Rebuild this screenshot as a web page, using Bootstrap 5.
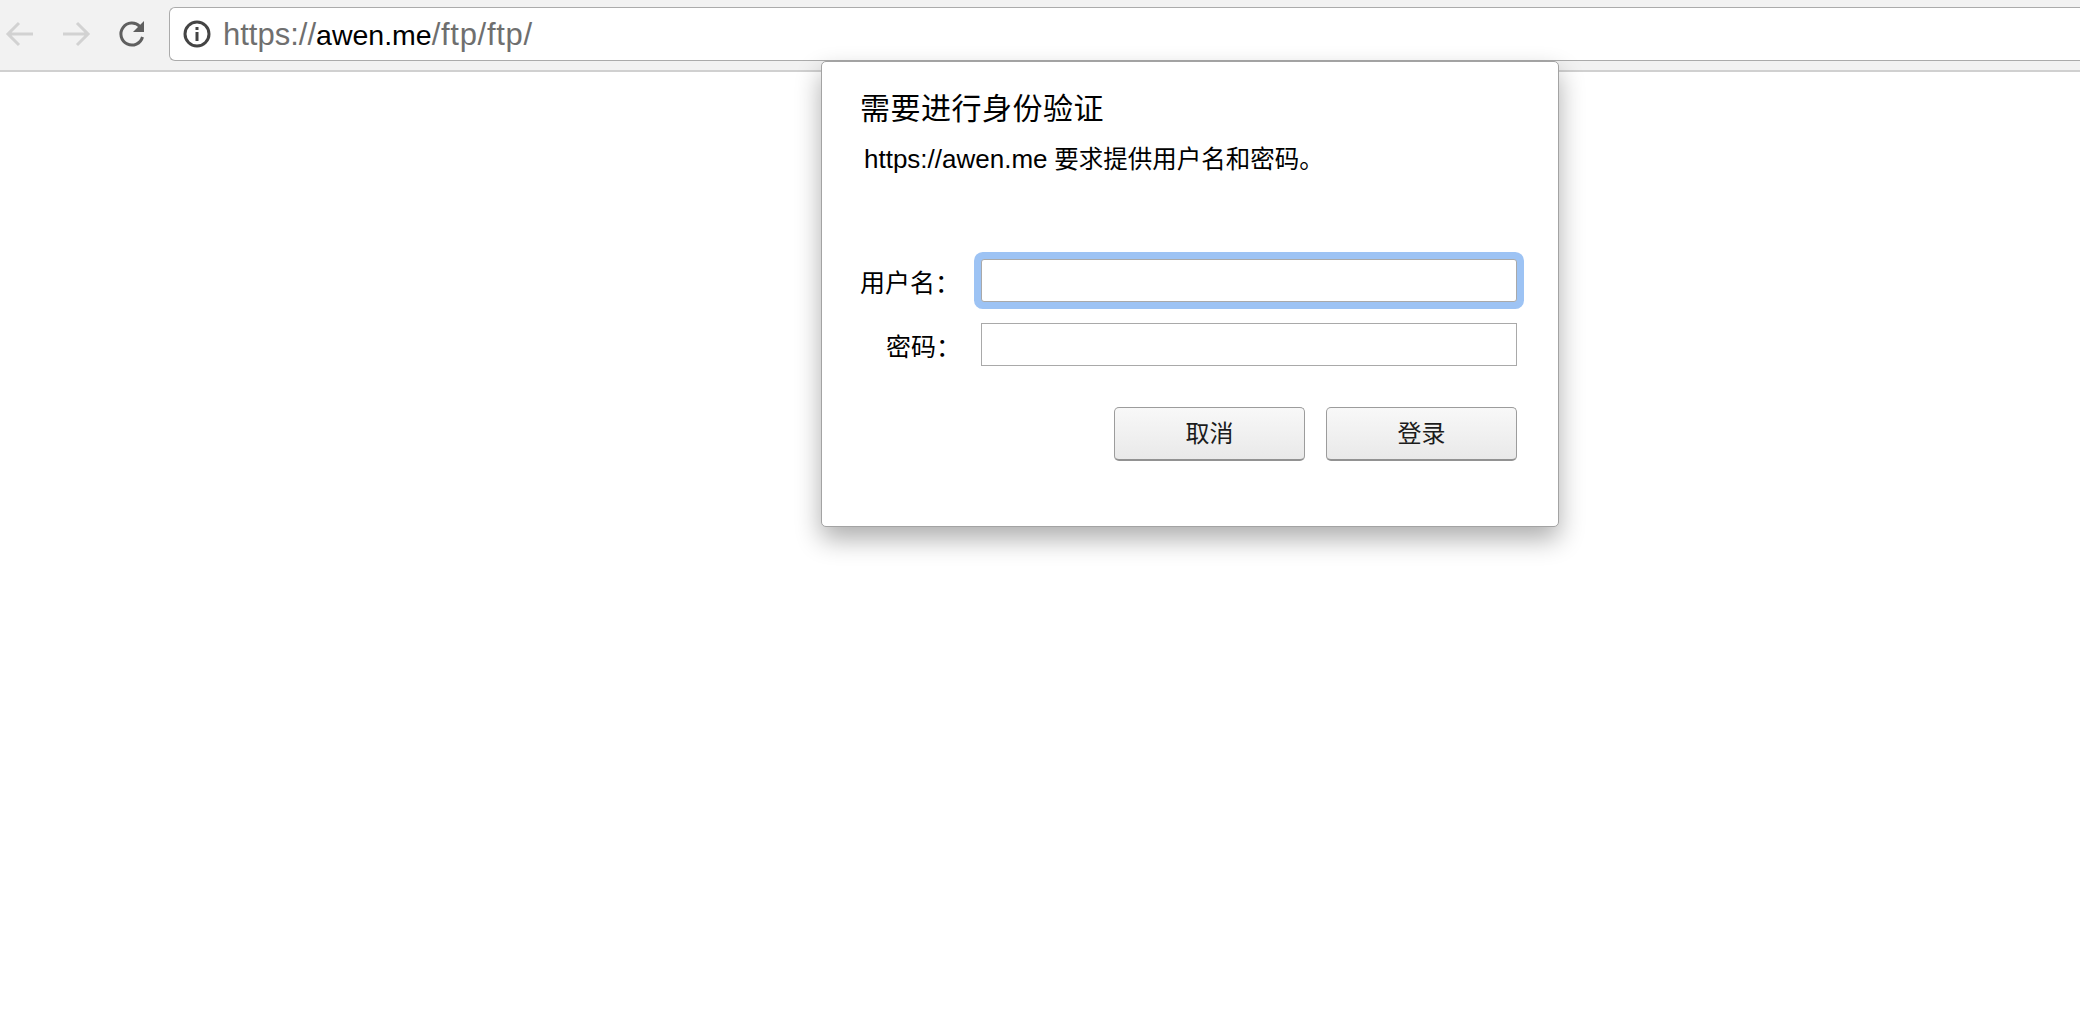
<!DOCTYPE html>
<html lang="zh">
<head>
<meta charset="utf-8">
<title>需要进行身份验证</title>
<link rel="stylesheet" href="https://cdn.jsdelivr.net/npm/bootstrap@5.3.0/dist/css/bootstrap.min.css">
<style>
html,body{height:100%;background:#fff;overflow:hidden}
body{font-family:"Liberation Sans","Noto Sans CJK SC",sans-serif;color:#000}
.tool-bar{height:72px;background:#f2f2f2;border-bottom:2px solid #d0d0d0;padding:7px 0 0 0}
.nav-ico{width:42px;height:42px;flex:none}
.nav-area{width:169px;height:54px;flex:none}
.nav-ico-a{margin-left:0}
.nav-ico-b{margin-left:13px}
.nav-ico-c{margin-left:14px}
.addr-bar{flex:1 0 auto;height:54px;background:#fff;border:1px solid #ababab;border-right:0;border-radius:6px 0 0 6px;padding-left:12px;font-size:31px;color:#6f6f6f;white-space:nowrap}
.addr-bar b{font-weight:400;color:#000;font-size:28.5px}
.addr-text{padding-top:2px}
.addr-path{letter-spacing:.7px}
.addr-info{width:30px;height:30px;margin-right:11px;flex:none}
.auth-box{position:absolute;left:821px;top:61px;width:738px;height:466px;background:#fff;border:1px solid #a3a3a3;border-radius:5px;box-shadow:0 12px 26px rgba(0,0,0,.32);padding:0 41px 0 38px}
.auth-title{font-size:30px;line-height:36px;margin:29px 0 0 0;font-weight:400;letter-spacing:.5px}
.auth-sub{font-size:24.5px;line-height:30px;margin:17px 0 0 4px}
.auth-sub span{font-size:26px}
.auth-rows{margin-top:84px}
.auth-row{height:43px}
.auth-row-a{margin-bottom:21px;height:43px}
.auth-lbl{width:121px;flex:none;font-size:25px;line-height:30px;white-space:nowrap;position:relative;top:2px;padding-left:26px}
.auth-lbl-a{padding-left:0}
.form-control.auth-in{width:536px;height:43px;border:1px solid #a9a9a9;border-radius:0;padding:0;box-shadow:none;background:#fff}
.form-control.auth-focus{border:1px solid #a9a9a9;box-shadow:0 0 0 7px #9dc3f4;border-radius:3px}
.auth-btns{gap:21px;margin-top:41px}
.btn.auth-btn{width:191px;height:54px;font-size:24px;line-height:1;color:#1c1c1c;border:1px solid #9c9c9c;border-bottom:2px solid #929292;border-radius:5px;background:linear-gradient(#f8f8f8,#e9e9e9);padding:0}
</style>
</head>
<body>
<div class="tool-bar d-flex align-items-start">
  <div class="nav-area d-flex align-items-center">
    <svg class="nav-ico nav-ico-a" viewBox="0 0 42 42" fill="none" stroke="#d2d2d2" stroke-width="3"><path d="M33 21H8M19 10 8 21l11 11"/></svg>
    <svg class="nav-ico nav-ico-b" viewBox="0 0 42 42" fill="none" stroke="#d2d2d2" stroke-width="3"><path d="M8 21h25M22 10l11 11-11 11"/></svg>
    <svg class="nav-ico nav-ico-c" viewBox="0 0 42 42"><path d="M31.5 24a11 11 0 1 1-2.6-10.500" fill="none" stroke="#5f5f5f" stroke-width="3"/><path d="M33 8v11H22z" fill="#5f5f5f"/></svg>
  </div>
  <div class="addr-bar d-flex align-items-center">
    <svg class="addr-info" viewBox="0 0 30 30"><circle cx="15" cy="15" r="12" fill="none" stroke="#444" stroke-width="3"/><rect x="13.500" y="13" width="3" height="9" fill="#444"/><rect x="13.500" y="8" width="3" height="3" fill="#444"/></svg>
    <span class="addr-text">https://<b>awen.me</b><span class="addr-path">/ftp/ftp/</span></span>
  </div>
</div>
<div class="auth-box">
  <h1 class="auth-title">需要进行身份验证</h1>
  <p class="auth-sub"><span>https://awen.me</span> 要求提供用户名和密码。</p>
  <form class="auth-rows">
    <div class="auth-row-a d-flex align-items-center">
      <label class="auth-lbl auth-lbl-a" for="u">用户名：</label>
      <input id="u" class="form-control auth-in auth-focus" type="text">
    </div>
    <div class="auth-row d-flex align-items-center">
      <label class="auth-lbl" for="p">密码：</label>
      <input id="p" class="form-control auth-in" type="password">
    </div>
    <div class="auth-btns d-flex justify-content-end">
      <button type="button" class="btn auth-btn">取消</button>
      <button type="button" class="btn auth-btn">登录</button>
    </div>
  </form>
</div>
<script src="https://cdn.jsdelivr.net/npm/bootstrap@5.3.0/dist/js/bootstrap.bundle.min.js"></script>
</body>
</html>
